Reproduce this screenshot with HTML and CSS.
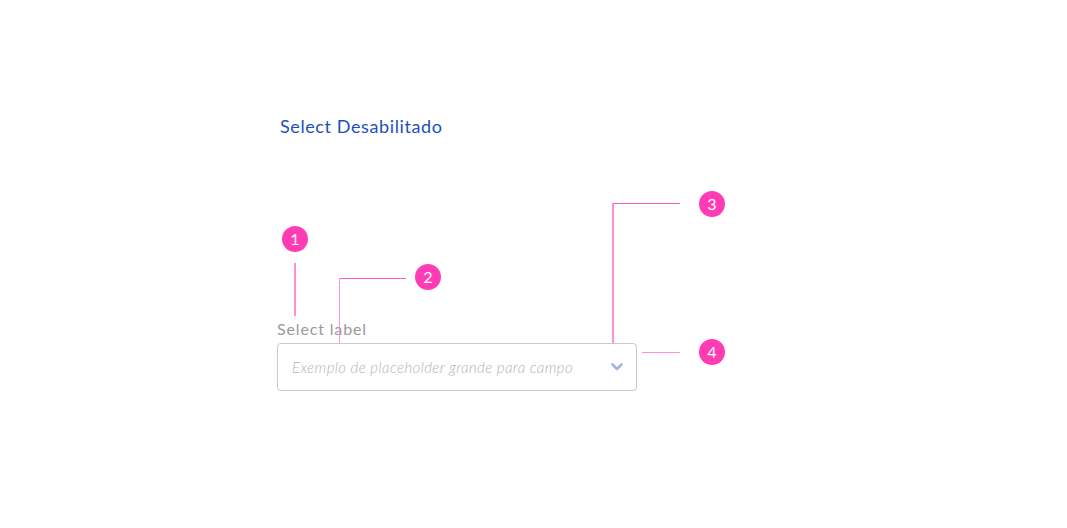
FILE: index.html
```html
<!DOCTYPE html>
<html lang="pt-BR">
<head>
    <meta charset="UTF-8">
    <meta name="viewport" content="width=device-width, initial-scale=1.0">
    <title>Select Desabilitado</title>
    <link rel="stylesheet" href="styles.css">
</head>
<body>

<div class="page">
    <h2 class="title">Select Desabilitado</h2>

    <!-- Select field -->
    <div class="field">
        <label class="field-label" for="sel">Select label</label>
        <div class="select" id="sel">
            <span class="placeholder">Exemplo de placeholder grande para campo</span>
            <svg class="chevron" width="12" height="8" viewBox="0 0 12 8">
                <path d="M1.5 1.5 L6 6 L10.5 1.5" fill="none" stroke="#9fb6e3" stroke-width="2.6" stroke-linecap="round" stroke-linejoin="round"/>
            </svg>
        </div>
    </div>

    <!-- Annotations -->
    <div class="marker m1">1</div>
    <div class="line l1-v"></div>

    <div class="marker m2">2</div>
    <div class="line l2-h"></div>
    <div class="line l2-v"></div>

    <div class="marker m3">3</div>
    <div class="line l3-h"></div>
    <div class="line l3-v"></div>

    <div class="marker m4">4</div>
    <div class="line l4-h"></div>
</div>

</body>
</html>
```

FILE: styles.css
```css
body {
    margin: 0;
    padding: 0;
    background: #fff;
    font-family: Lato, "Open Sans", sans-serif;
}

.page {
    position: relative;
    width: 1067px;
    height: 528px;
    padding: 114px 0 0 277px;
    box-sizing: border-box;
}

/* Title */
.title {
    margin: 0 0 0 3px;
    font-size: 18px;
    font-weight: 400;
    color: #1d4fbf;
    line-height: 24px;
    letter-spacing: 0.6px;
}

/* Field */
.field {
    margin-top: 181px;
    width: 360px;
}

.field-label {
    display: block;
    font-size: 16px;
    color: #9a9a9a;
    line-height: 20px;
    margin-bottom: 4px;
    letter-spacing: 0.85px;
}

.select {
    display: flex;
    align-items: center;
    justify-content: space-between;
    height: 48px;
    box-sizing: border-box;
    border: 1px solid #c9c9c9;
    border-radius: 4px;
    padding: 0 13px 0 14px;
}

.placeholder {
    font-size: 15px;
    font-style: italic;
    font-weight: 300;
    color: #b4b4b4;
    letter-spacing: 0.4px;
}

.chevron {
    display: block;
}

/* Annotation markers */
.marker {
    position: absolute;
    width: 26px;
    height: 26px;
    border-radius: 50%;
    background: #ff3cb4;
    color: #fff;
    font-size: 16px;
    font-weight: 400;
    line-height: 26px;
    text-align: center;
}

.m1 { left: 282px; top: 226px; }
.m2 { left: 415px; top: 264px; }
.m3 { left: 699px; top: 191px; }
.m4 { left: 699px; top: 339px; }

.line {
    position: absolute;
    background: #ff8fd2;
}

.l1-v { left: 294px; top: 263px; width: 2px; height: 53px; }

.l2-h { left: 339px; top: 278px; width: 67px; height: 1px; background: #ff5cc0; }
.l2-v { left: 339px; top: 278px; width: 1px; height: 65px; }

.l3-h { left: 612px; top: 203px; width: 68px; height: 1px; background: #ff5cc0; }
.l3-v { left: 612px; top: 203px; width: 2px; height: 140px; }

.l4-h { left: 642px; top: 352px; width: 38px; height: 1px; }
```
